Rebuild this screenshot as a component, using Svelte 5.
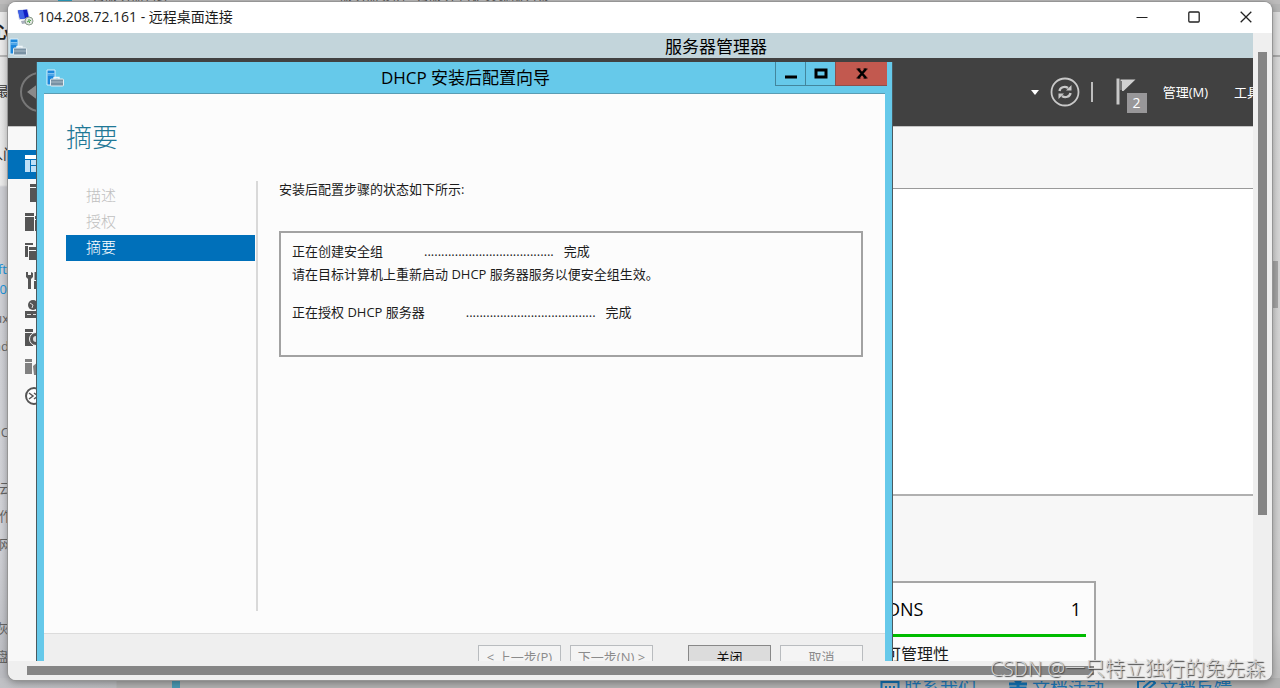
<script lang="ts">
	const steps = ['描述', '授权', '摘要'];
	let current = $state('摘要');

	const dots = '.'.repeat(38);

	const tools = ['server', 'local', 'all', 'wrench', 'globe', 'disk', 'file', 'ps'];

	const pageGroups = [
		{ kind: 'bold', lines: ['心'] },
		{ kind: 'nav', lines: ['最'] },
		{ kind: 'tab', lines: ['入门'] },
		{ kind: 'link', lines: ['soft', '20'] },
		{ kind: 'tree', lines: ['Linux', 'wind'] },
		{ kind: 'single', lines: ['NIC'] },
		{ kind: 'list', lines: ['云', '作', '网'] },
		{ kind: 'last', lines: ['灰', '磁盘'] }
	];
</script>

{#snippet serverIcon()}
	<svg class="server-icon" viewBox="0 0 18 18" aria-hidden="true">
		<path d="M1 1h8v15H1z" fill="#1b87dc" stroke="#d8effb" />
		<path d="M1.5 4.5h7M1.5 6h7" stroke="#9dd3f6" stroke-width="0.8" />
		<path d="M8 10V8.500h5V10" fill="none" stroke="#eef6fa" stroke-width="1.4" />
		<rect x="4.500" y="10" width="13" height="7" rx="1" fill="#7891a3" stroke="#e4eef3" />
		<path d="M5 13h12" stroke="#a9bbc7" />
	</svg>
{/snippet}

<div class="desktop">
	<div class="page-tabs">
		<span class="tab-dot"></span>
		<span>云服务器管理</span>
		<span class="far">服务器实例 - 云服务 自定义镜像列表</span>
	</div>
	<div class="page-side">
		{#each pageGroups as group}
			<div class="group {group.kind}">
				{#each group.lines as line}
					<span>{line}</span>
				{/each}
			</div>
		{/each}
	</div>
	<div class="page-right"><span></span></div>
	<div class="page-bottom">
		<span class="blue-bar"></span>
		<a href="#contact">
			<svg viewBox="0 0 20 18"><path d="M1.500 4h17v13h-17zM5 9h2m2 0h2m2 0h2" /></svg>
			联系我们
		</a>
		<a href="#events">
			<svg viewBox="0 0 20 18"><path d="M1 6h18M3 10h14v8H3zM10 4v13M10 5L6 1M10 5l4-4" stroke-width="3" /></svg>
			文档活动
		</a>
		<a href="#feedback">
			<svg viewBox="0 0 20 18"><path d="M9 3H2v15h15v-6M7 13l1-4 8-7 3 3-8 7z" /></svg>
			文档反馈
		</a>
	</div>

	<section class="rdp">
		<header class="rdp-title">
			<svg class="rdp-icon" viewBox="0 0 18 18" aria-hidden="true">
				<path d="M1 2l11-1 2 10-11 1z" fill="#d7dcec" />
				<path d="M2 2.500l9-1 2 8.500-9 1z" fill="#1020c4" />
				<path d="M2 2.500l5-.6 2 8.600-5 .5z" fill="#3d62e6" />
				<path d="M5 13l6-1 1 3-6 1z" fill="#a9afbd" />
				<circle cx="13" cy="13" r="4" fill="#dfe6df" stroke="#8b9a8b" />
				<path d="M11 14l2-1v-2M15 12l-1.500 1.500V15" fill="none" stroke="#4da24a" />
			</svg>
			<h1>104.208.72.161 - 远程桌面连接</h1>
			<div class="rdp-buttons">
				<button aria-label="最小化"><svg viewBox="0 0 12 12"><path d="M0.500 6.500h11" stroke-width="1" /></svg></button>
				<button aria-label="最大化"><svg viewBox="0 0 12 12"><rect x="0.800" y="1" width="10.400" height="10" rx="1" /></svg></button>
				<button aria-label="关闭窗口"><svg viewBox="0 0 12 12"><path d="M0.700 0.700l10.600 10.600M11.300 0.700L0.700 11.300" /></svg></button>
			</div>
		</header>

		<div class="rdp-view">
			<div class="manager">
				<header class="manager-title">
					{@render serverIcon()}
					<h2>服务器管理器</h2>
				</header>
				<nav class="toolbar">
					<button class="back" aria-label="后退">
						<svg viewBox="0 0 42 42">
							<circle cx="21" cy="21" r="19" fill="none" stroke="#777" stroke-width="2" />
							<path d="M8 21l12-9v6h12v6H20v6z" fill="#8a8a8a" />
						</svg>
					</button>
					<div class="toolbar-right">
						<button class="drop" aria-label="更多"><svg viewBox="0 0 8 5"><path d="M0 0h8L4 5z" fill="#fff" /></svg></button>
						<button class="refresh" aria-label="刷新">
							<svg viewBox="0 0 30 30" fill="none" stroke="#c8c8c8">
								<circle cx="15" cy="15" r="13.500" stroke-width="1.800" />
								<path d="M9.500 14c.5-3.500 5-5.500 8.500-3M20.500 16c-.5 3.500-5 5.500-8.500 3" stroke-width="2.400" />
								<path d="M21.500 8v5.500H16zM8.500 22v-5.500H14z" fill="#c8c8c8" stroke="none" />
							</svg>
						</button>
						<span class="sep"></span>
						<button class="flag" aria-label="通知">
							<svg viewBox="0 0 20 28">
								<path d="M0.500 0.500h3v26h-3z" fill="#c8c8c8" />
								<path d="M4.500 1.500h15L7.500 13H6V3H4.500z" fill="#d0d0d0" />
								<path d="M5 3v9" stroke="#a9a9a9" />
							</svg>
							<span class="badge">2</span>
						</button>
						<button class="menu">管理(M)</button>
						<button class="menu cut">工具(T)</button>
					</div>
				</nav>
				<div class="manager-body">
					<aside class="tools">
						<button class="tool selected" aria-label="仪表板">
							<svg viewBox="0 0 20 18"><path d="M0 0h20v4H0z" fill="#fff" /><path d="M0 5h5v12H0zM6 5h14v5H6zM6 11h6v6H6zM13 11h7v6h-7z" fill="#bfe0f7" /></svg>
						</button>
						{#each tools as tool}
							<button class="tool" aria-label={tool}>
								<svg viewBox="0 0 20 18" fill="#555">
									{#if tool === 'server'}
										<path d="M5 0h12v3H5zM5 4h12v14H5z" />
									{:else if tool === 'local'}
										<path d="M0 0h9v3H0zM0 4h9v14H0zM10 3h8v3h-8zM10 7h8v11h-8z" />
									{:else if tool === 'all'}
										<path d="M0 1h8v2H0zM0 4h3v11H0zM4 5h12v3H4zM4 9h12v9H4z" />
									{:else if tool === 'wrench'}
										<path d="M1 1l2 0v3h3V1l2 1v4L6 8v10H3V8L1 6zM9.500 1h2v8h-2zM9 10h3v8H9z" />
									{:else if tool === 'globe'}
										<circle cx="8" cy="5" r="5" />
										<path d="M0 11h16v7H0z" />
										<path d="M2 14.500h4M8 14.500h4M5 3l3 2-1 3" stroke="#ddd" fill="none" />
									{:else if tool === 'disk'}
										<path d="M0 0h8v3H0zM0 4h8v13H0z" />
										<circle cx="11" cy="10" r="6.500" stroke="#f8f8f8" />
										<circle cx="11" cy="10" r="3" fill="#ddd" />
									{:else if tool === 'file'}
										<g fill="#808080"><path d="M0 1h7v3H0zM0 5h7v11H0zM8 8l5-4 5 4v9H9z" /></g>
									{:else}
										<circle cx="9" cy="9" r="8" fill="#fff" stroke="#555" stroke-width="2" />
										<path d="M4 6l4 3-4 3M9 6l4 3-4 3" fill="none" stroke="#555" stroke-width="1.500" />
									{/if}
								</svg>
							</button>
						{/each}
					</aside>
					<main class="dashboard">
						<div class="welcome"></div>
						<article class="card">
							<header>
								<h3>DNS</h3>
								<strong>1</strong>
							</header>
							<p>可管理性</p>
						</article>
					</main>
				</div>
			</div>

			<section class="wizard">
				<header class="wizard-title">
					{@render serverIcon()}
					<h2>DHCP 安装后配置向导</h2>
					<div class="wizard-buttons">
						<button aria-label="最小化"><svg viewBox="0 0 14 12"><path d="M1 9h12" stroke-width="3" /></svg></button>
						<button aria-label="最大化"><svg viewBox="0 0 14 12"><path d="M2 2h10v7H2z" stroke-width="3" /></svg></button>
						<button class="close" aria-label="关闭向导"><svg viewBox="0 0 14 12"><path d="M3 1l8 9M11 1l-8 9" stroke-width="2.600" /><path d="M1.500 1h4M8.500 1h4M1.500 10h4M8.500 10h4" stroke-width="1" /></svg></button>
					</div>
				</header>
				<div class="wizard-body">
					<h3>摘要</h3>
					<div class="columns">
						<nav class="steps">
							{#each steps as step}
								<button disabled={step !== current} class:active={step === current}>{step}</button>
							{/each}
						</nav>
						<div class="result">
							<p class="intro">安装后配置步骤的状态如下所示:</p>
							<div class="log">
								<p><span>正在创建安全组</span><span class="dots">{dots}</span><span>完成</span></p>
								<p>请在目标计算机上重新启动 DHCP 服务器服务以便安全组生效。</p>
								<p class="gap"><span>正在授权 DHCP 服务器</span><span class="dots">{dots}</span><span>完成</span></p>
							</div>
						</div>
					</div>
				</div>
				<footer class="wizard-footer">
					<button disabled>&lt; 上一步(P)</button>
					<button disabled>下一步(N) &gt;</button>
					<button class="primary">关闭</button>
					<button disabled>取消</button>
				</footer>
			</section>
		</div>

		<div class="scroll-y"><span></span></div>
		<div class="scroll-x"><span></span></div>
		<div class="corner"></div>
	</section>

	<span class="watermark">CSDN @一只特立独行的兔先森</span>
</div>

<style>
	:global(body) {
		font-family: 'Open Sans', 'Noto Sans CJK SC', sans-serif;
		font-size: 13px;
		color: #1c1c1c;
	}

	h1, h2, h3, p {
		margin: 0;
		font-weight: 400;
	}

	button {
		font: inherit;
		color: inherit;
		padding: 0;
		border: 0;
		background: none;
	}

	svg {
		display: block;
		flex-shrink: 0;
	}

	.desktop {
		position: relative;
		height: 100vh;
		overflow: hidden;
		background: #b5b5b5;
	}

	/* page behind the remote window */
	.page-tabs {
		display: flex;
		align-items: flex-end;
		gap: 20px;
		height: 4px;
		padding-left: 58px;
		line-height: 15px;
		background: #bdbcbc;
		color: #555;
		white-space: nowrap;
	}

	.page-tabs .far {
		margin-left: 150px;
	}

	.tab-dot {
		width: 14px;
		height: 4px;
		background: #2b9fc0;
	}

	.page-side {
		position: absolute;
		top: 12px;
		left: 0;
		bottom: 0;
		width: 24px;
		background: linear-gradient(#ececec 43px, #b8b8b8 43px, #b8b8b8 45px, #e8e8e8 45px, #ebebeb 173px, #cfd0d5 175px, #d2d3d8 520px, #bcbdc2 660px);
		color: #666;
	}

	.group {
		display: flex;
		flex-direction: column;
		align-items: flex-end;
		width: 9px;
		line-height: 28px;
		white-space: nowrap;
	}

	.group.bold {
		padding-top: 6px;
		font-size: 16px;
		font-weight: 700;
		color: #222;
	}

	.group.nav {
		padding-top: 31px;
		color: #333;
	}

	.group.tab {
		width: 17px;
		padding-top: 35px;
		font-size: 14px;
		color: #333;
	}

	.group.link {
		width: 7px;
		padding-top: 91px;
		line-height: 20px;
		color: #1a94dc;
	}

	.group.tree {
		padding-top: 5px;
	}

	.group.single {
		padding-top: 58px;
	}

	.group.list {
		width: 12px;
		padding-top: 28px;
	}

	.group.last {
		padding-top: 56px;
	}

	.page-right {
		position: absolute;
		top: 12px;
		right: 0;
		bottom: 0;
		width: 24px;
		padding-top: 249px;
		box-sizing: border-box;
		background: linear-gradient(#dedede 43px, #aaa 43px, #aaa 45px, #d9d9d9 45px, #cfcfcf 620px, #bbb);
	}

	.page-right span {
		display: block;
		width: 22px;
		height: 47px;
		background: #a5a5a5;
	}

	.page-bottom {
		position: absolute;
		left: 0;
		right: 0;
		bottom: -10px;
		height: 20px;
		display: flex;
		justify-content: flex-end;
		gap: 32px;
		padding-right: 48px;
		box-sizing: border-box;
		background: linear-gradient(90deg, #c0c1c5, #bcbdc0 116px, #b2b2b2 117px);
		font-size: 18px;
		line-height: 20px;
	}

	.page-bottom .blue-bar {
		width: 8px;
		margin-left: 172px;
		margin-right: auto;
		background: #4a9ab4;
	}

	.page-bottom a {
		display: flex;
		gap: 4px;
		color: #1e78b8;
		text-decoration: none;
	}

	.page-bottom svg {
		width: 20px;
		height: 18px;
		fill: none;
		stroke: #1272b4;
		stroke-width: 2;
	}

	/* remote desktop window */
	.rdp {
		position: absolute;
		top: 2px;
		left: 8px;
		right: 8px;
		bottom: 8px;
		display: grid;
		grid-template: 31px 1fr 19px / 1fr 19px;
		border-radius: 8px;
		overflow: hidden;
		background: #efefef;
		box-shadow: 0 0 0 1px #959595, 0 2px 8px rgba(0, 0, 0, 0.4);
	}

	.rdp-title {
		grid-column: 1 / -1;
		display: flex;
		align-items: center;
		gap: 4px;
		padding: 0 20px 2px 8px;
		background: #fff;
	}

	.rdp-icon {
		width: 18px;
		height: 18px;
	}

	.rdp-title h1 {
		flex: 1;
		font-size: 14px;
		line-height: 28px;
	}

	.rdp-buttons {
		display: flex;
		gap: 40px;
	}

	.rdp-buttons svg {
		width: 12px;
		height: 12px;
		fill: none;
		stroke: #222;
		stroke-width: 1.3;
	}

	.rdp-view {
		position: relative;
		overflow: hidden;
		min-height: 0;
	}

	.manager {
		display: flex;
		flex-direction: column;
		height: 100%;
		background: #f7f7f7;
	}

	.server-icon {
		width: 18px;
		height: 18px;
	}

	.manager-title {
		display: grid;
		grid-template-columns: 1fr auto 1fr;
		align-items: center;
		height: 25px;
		flex-shrink: 0;
		padding: 0 0 0 1px;
		margin-right: -170px;
		background: #c3d5db;
		color: #000;
	}

	.manager-title h2 {
		font-size: 17px;
		line-height: 27px;
	}

	.toolbar {
		display: flex;
		align-items: center;
		justify-content: space-between;
		height: 68px;
		flex-shrink: 0;
		padding-left: 11px;
		border-bottom: 1px solid #c4c4c4;
		background: #414141;
		color: #fff;
	}

	.back svg {
		width: 42px;
		height: 42px;
	}

	.toolbar-right {
		display: flex;
		align-items: center;
	}

	.drop svg {
		width: 8px;
		height: 5px;
	}

	.refresh {
		margin-left: 11px;
	}

	.refresh svg {
		width: 30px;
		height: 30px;
	}

	.sep {
		width: 2px;
		height: 20px;
		margin-left: 11px;
		background: #bdbdbd;
	}

	.flag {
		position: relative;
		width: 31px;
		height: 34px;
		margin-left: 23px;
	}

	.flag svg {
		width: 20px;
		height: 28px;
	}

	.badge {
		position: absolute;
		left: 11px;
		top: 18px;
		width: 20px;
		font-size: 14px;
		line-height: 20px;
		background: #989799;
	}

	.menu {
		margin-left: 16px;
		white-space: nowrap;
		line-height: 20px;
	}

	.menu.cut {
		width: 19px;
		margin-left: 26px;
		overflow: hidden;
		text-align: left;
	}

	.manager-body {
		display: flex;
		flex: 1;
		min-height: 0;
	}

	.tools {
		display: flex;
		flex-direction: column;
		width: 190px;
		padding-top: 23px;
		background: #f8f8f8;
	}

	.tool {
		display: flex;
		align-items: center;
		height: 29px;
		flex-shrink: 0;
		padding: 0 0 2px 17px;
		box-sizing: border-box;
	}

	.tool.selected {
		background: #0070ba;
	}

	.tool svg {
		width: 20px;
		height: 18px;
	}

	.dashboard {
		flex: 1;
		padding-top: 61px;
		background: #f7f7f7;
	}

	.welcome {
		height: 305px;
		border-top: 1px solid #9a9a9a;
		border-bottom: 2px solid #b0b0b0;
		background: #fff;
	}

	.card {
		width: 280px;
		height: 170px;
		margin: 85px 157px 0 auto;
		padding: 1px 8px 0;
		box-sizing: border-box;
		border: 2px solid #a6a6a6;
		background: #fcfcfc;
	}

	.card header {
		display: flex;
		justify-content: space-between;
		padding: 1px 5px 0 61px;
		border-bottom: 3px solid #00bc00;
		font-size: 18px;
		line-height: 49px;
		color: #000;
	}

	.card h3 {
		font-size: 18px;
	}

	.card strong {
		font-weight: 400;
	}

	.card p {
		padding-left: 59px;
		font-size: 16px;
		line-height: 34px;
	}

	/* DHCP wizard */
	.wizard {
		position: absolute;
		top: 29px;
		left: 28px;
		bottom: -38px;
		width: 857px;
		display: flex;
		flex-direction: column;
		box-sizing: border-box;
		padding: 0 7px 7px;
		border: solid #4b5a60;
		border-width: 0 1px 1px;
		background: #66c9ea;
	}

	.wizard-title {
		display: grid;
		grid-template-columns: 1fr auto 1fr;
		align-items: center;
		height: 32px;
		flex-shrink: 0;
		margin-right: -2px;
		color: #000;
	}

	.wizard-title h2 {
		font-size: 17px;
		line-height: 32px;
	}

	.wizard-title .server-icon {
		margin-left: 2px;
	}

	.wizard-buttons {
		display: flex;
		align-self: start;
		justify-self: end;
	}

	.wizard-buttons button {
		display: flex;
		align-items: center;
		justify-content: center;
		width: 30px;
		height: 24px;
		box-sizing: border-box;
		border: solid #43869d;
		border-width: 0 0 1px 1px;
	}

	.wizard-buttons .close {
		width: 52px;
		background: #c2594f;
		border-color: #8d4f4c;
	}

	.wizard-buttons svg {
		width: 14px;
		height: 12px;
		fill: none;
		stroke: #000;
	}

	.wizard-body {
		display: flex;
		flex-direction: column;
		flex: 1;
		min-height: 0;
		padding: 23px 22px 22px;
		background: #fcfcfc;
		box-shadow: 0 -1px #5a9cb3;
	}

	.wizard-body h3 {
		padding-bottom: 24px;
		font-size: 26px;
		font-weight: 300;
		line-height: 40px;
		color: #1f7896;
	}

	.columns {
		display: flex;
		flex: 1;
	}

	.steps {
		display: flex;
		flex-direction: column;
		width: 189px;
		padding: 2px 1px 0 0;
		border-right: 2px solid #d9d9d9;
	}

	.steps button {
		height: 26px;
		padding: 0 0 2px 20px;
		font-size: 15px;
		font-weight: 300;
		text-align: left;
		line-height: 24px;
		color: #c0c0c0;
	}

	.steps .active {
		background: #0070ba;
		color: #fff;
	}

	.result {
		flex: 1;
		padding-left: 21px;
	}

	.intro {
		line-height: 16px;
		padding-bottom: 34px;
	}

	.log {
		padding: 7px 11px 31px;
		border: 2px solid #a2a2a2;
		line-height: 23px;
	}

	.log p {
		display: flex;
	}

	.log .gap {
		margin-top: 15px;
	}

	.log .dots {
		margin: 0 10px 0 41px;
	}

	.wizard-footer {
		display: flex;
		justify-content: flex-end;
		gap: 9px;
		padding: 11px 22px 21px;
		border-top: 1px solid #dcdcdc;
		background: #efefef;
	}

	.wizard-footer button {
		width: 83px;
		height: 25px;
		box-sizing: border-box;
		border: 1px solid #b9bcbf;
		background: #f4f4f4;
		line-height: 23px;
		color: #8b8b8b;
	}

	.wizard-footer .primary {
		margin-left: 26px;
		border-color: #888;
		background: #dcdcdc;
		color: #111;
	}

	/* window scrollbars */
	.scroll-y {
		padding: 19px 5px 0;
		background: #efefef;
	}

	.scroll-y span {
		display: block;
		height: 76%;
		background: #858585;
	}

	.scroll-x {
		padding: 5px 0 5px 19px;
		background: #efefef;
	}

	.scroll-x span {
		display: block;
		width: 87%;
		height: 9px;
		background: #858585;
	}

	.corner {
		background: #efefef;
	}

	.watermark {
		position: absolute;
		right: 15px;
		bottom: 4px;
		font-size: 20px;
		font-weight: 300;
		line-height: 30px;
		color: #d4d4d4;
		text-shadow: 1px 1px 1px #444;
		white-space: nowrap;
	}
</style>
